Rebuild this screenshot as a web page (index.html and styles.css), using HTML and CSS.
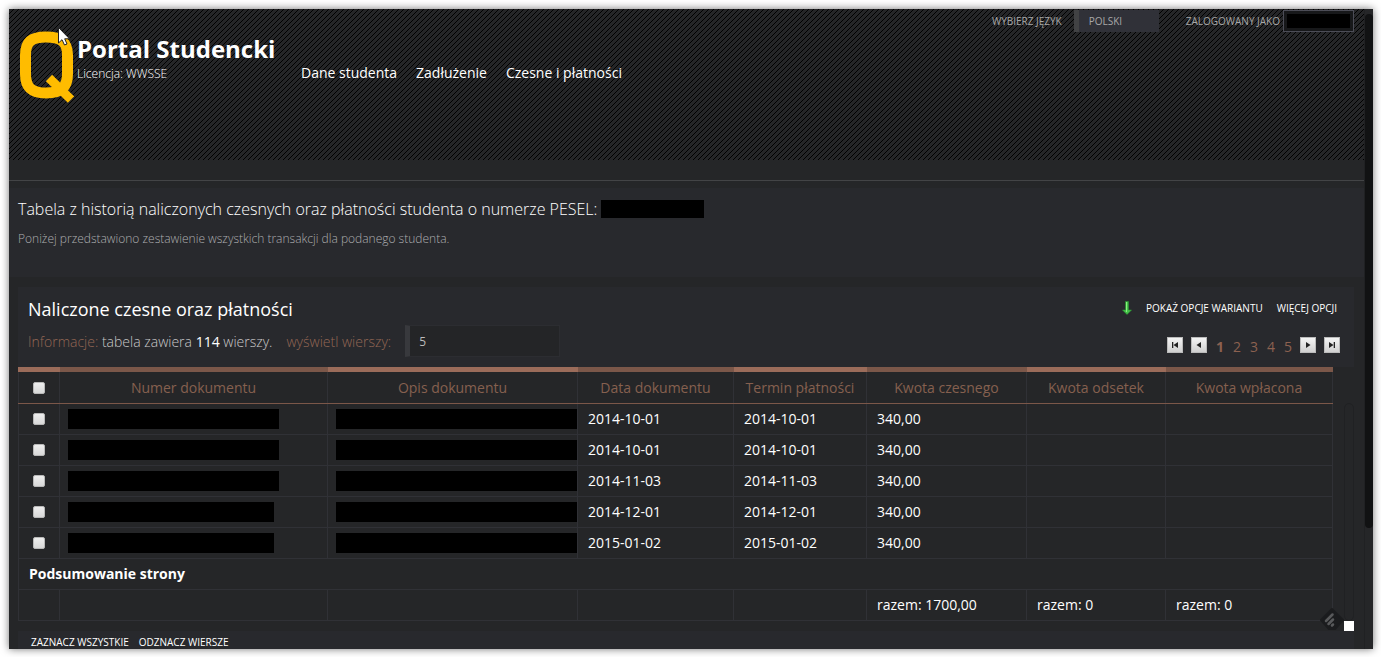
FILE: index.html
```
<!DOCTYPE html>
<html lang="pl">
<head>
<meta charset="utf-8">
<title>Portal Studencki</title>
<link rel="stylesheet" href="styles.css">
</head>
<body>
<div class="frame">
  <div class="page">
    <header class="header">
      <svg class="logo" viewBox="0 0 54 72" aria-hidden="true"><path d="M26 6 C11 6 5.500 11 5.500 24 V43 C5.500 56 11 62 26 62 C41 62 47.500 56 47.500 43 V24 C47.500 11 41 6 26 6Z" fill="none" stroke="#ffbc00" stroke-width="11"/><path d="M29 47 L51 68.500" stroke="#ffbc00" stroke-width="9"/></svg>
      <div class="brand">
        <h1>Portal Studencki</h1>
        <p>Licencja: WWSSE</p>
      </div>
      <nav class="nav">
        <a href="#">Dane studenta</a>
        <a href="#">Zadłużenie</a>
        <a href="#">Czesne i płatności</a>
      </nav>
      <div class="account">
        <label for="lang">WYBIERZ JĘZYK</label>
        <select id="lang" class="lang"><option>POLSKI</option></select>
        <span class="logged">ZALOGOWANY JAKO</span>
        <a href="#" class="user" aria-label="Konto"><span class="redacted"></span></a>
      </div>
      <svg class="cursor" viewBox="0 0 12 19" aria-hidden="true"><path d="M.5 .5 V16 L4 12.700 L6.500 18 L9 17 L6.700 11.800 H11.500Z" fill="#fff" stroke="#222"/></svg>
    </header>
    <div class="rule"></div>
    <section class="intro">
      <h2>Tabela z historią naliczonych czesnych oraz płatności studenta o numerze PESEL: <span class="redacted pesel"></span></h2>
      <p>Poniżej przedstawiono zestawienie wszystkich transakcji dla podanego studenta.</p>
    </section>
    <section class="panel">
      <div class="panel-head">
        <div>
          <h3>Naliczone czesne oraz płatności</h3>
          <div class="info">
            <p><span class="accent">Informacje:</span> tabela zawiera <b>114</b> wierszy.</p>
            <label for="rows" class="accent">wyświetl wierszy:</label>
            <input id="rows" class="rows" type="text" value="5">
          </div>
        </div>
        <div class="tools">
          <div class="options">
            <svg class="arrow" viewBox="0 0 10 14" aria-hidden="true"><path d="M3.500 .5 H6.500 V9 H9.500 L5 13.500 L.5 9 H3.500Z" fill="#45c24a" stroke="#2a9430" stroke-width=".6"/><path d="M4.500 1 V11" stroke="#8af07e"/></svg>
            <a href="#">POKAŻ OPCJE WARIANTU</a>
            <a href="#">WIĘCEJ OPCJI</a>
          </div>
          <div class="pager">
            <button aria-label="Pierwsza"><svg viewBox="0 0 8 8"><path d="M1 1 H2.300 V7 H1Z M7 1 V7 L2.500 4Z"/></svg></button>
            <button aria-label="Poprzednia"><svg viewBox="0 0 8 8"><path d="M6 1 V7 L1.500 4Z"/></svg></button>
            <span class="pages"><a href="#" class="current">1</a><a href="#">2</a><a href="#">3</a><a href="#">4</a><a href="#">5</a></span>
            <button aria-label="Następna"><svg viewBox="0 0 8 8"><path d="M2 1 V7 L6.500 4Z"/></svg></button>
            <button aria-label="Ostatnia"><svg viewBox="0 0 8 8"><path d="M7 1 H5.700 V7 H7Z M1 1 V7 L5.500 4Z"/></svg></button>
          </div>
        </div>
      </div>
      <div class="table-area">
        <table class="data">
          <colgroup><col class="c-check"><col class="c-number"><col class="c-desc"><col class="c-date"><col class="c-due"><col class="c-fee"><col class="c-interest"><col class="c-paid"></colgroup>
          <thead>
            <tr><th><input type="checkbox" aria-label="Zaznacz wszystkie"></th><th>Numer dokumentu</th><th>Opis dokumentu</th><th>Data dokumentu</th><th>Termin płatności</th><th>Kwota czesnego</th><th>Kwota odsetek</th><th>Kwota wpłacona</th></tr>
          </thead>
          <tbody>
            <tr><td><input type="checkbox" aria-label="Wiersz 1"></td><td class="mask"><span class="redacted"></span></td><td class="mask"><span class="redacted"></span></td><td>2014-10-01</td><td>2014-10-01</td><td>340,00</td><td></td><td></td></tr>
            <tr><td><input type="checkbox" aria-label="Wiersz 2"></td><td class="mask"><span class="redacted"></span></td><td class="mask"><span class="redacted"></span></td><td>2014-10-01</td><td>2014-10-01</td><td>340,00</td><td></td><td></td></tr>
            <tr><td><input type="checkbox" aria-label="Wiersz 3"></td><td class="mask"><span class="redacted"></span></td><td class="mask"><span class="redacted"></span></td><td>2014-11-03</td><td>2014-11-03</td><td>340,00</td><td></td><td></td></tr>
            <tr><td><input type="checkbox" aria-label="Wiersz 4"></td><td class="mask"><span class="redacted narrow"></span></td><td class="mask"><span class="redacted"></span></td><td>2014-12-01</td><td>2014-12-01</td><td>340,00</td><td></td><td></td></tr>
            <tr><td><input type="checkbox" aria-label="Wiersz 5"></td><td class="mask"><span class="redacted narrow"></span></td><td class="mask"><span class="redacted"></span></td><td>2015-01-02</td><td>2015-01-02</td><td>340,00</td><td></td><td></td></tr>
          </tbody>
          <tfoot>
            <tr><td colspan="8" class="summary">Podsumowanie strony</td></tr>
            <tr><td></td><td></td><td></td><td></td><td></td><td>razem: 1700,00</td><td>razem: 0</td><td>razem: 0</td></tr>
          </tfoot>
        </table>
        <div class="side-track"></div>
        <div class="corner"></div>
        <svg class="badge" viewBox="0 0 24 24" aria-hidden="true"><path d="M12 1 L23 12 L15 21 H9 L1 12Z" fill="#1b1c1e" stroke="#1b1c1e" stroke-width="2" stroke-linejoin="round"/><path d="M6 13 L12.500 6.500 M8.500 16 L13 11.500 M12 17.500 L13 16.500" stroke="#58595b" stroke-width="2.500" stroke-linecap="round"/></svg>
      </div>
      <div class="actions"><a href="#">ZAZNACZ WSZYSTKIE</a><a href="#">ODZNACZ WIERSZE</a></div>
    </section>
  </div>
  <div class="scrollbar"><div class="thumb"></div></div>
</div>
</body>
</html>
```
FILE: styles.css
```
* { box-sizing: border-box; }
html { background: #fff; }
body { margin: 0; padding: 9px 8px 8px 9px; background: #fff; font-family: "Open Sans", "Noto Sans", sans-serif; font-size: 14px; color: #fff; }
h1, h2, h3, p { margin: 0; }
a { color: inherit; text-decoration: none; }
.frame { position: relative; display: flex; height: calc(100vh - 17px); overflow: hidden; background: #252628; }
body::before { content: ""; position: absolute; top: 9px; right: 8px; bottom: 8px; left: 9px; box-shadow: 0 0 8px rgba(0, 0, 0, .55); }
.page { flex: 1; min-width: 0; }
.header { position: relative; display: flex; align-items: flex-start; height: 151px; padding-left: 11px; background-color: #252628; background-image: url("data:image/svg+xml,%3Csvg xmlns='http://www.w3.org/2000/svg' width='5' height='5' shape-rendering='crispEdges'%3E%3Cpath d='M4 0h1v1H4zM3 1h1v1H3zM2 2h1v1H2zM1 3h1v1H1zM0 4h1v1H0z'/%3E%3C/svg%3E"); }
.logo { width: 54px; height: 72px; margin-top: 22px; }
.brand { width: 224px; margin: 24px 0 0 3px; }
.brand h1 { font-size: 24px; line-height: 32px; font-weight: 700; }
.brand p { font-size: 12px; line-height: 17px; font-weight: 300; }
.nav { display: flex; gap: 19px; margin-top: 54px; line-height: 20px; }
.account { display: flex; align-items: flex-start; margin: 1px 10px 0 auto; font-size: 10px; line-height: 23px; color: #a7a7a7; }
.lang { appearance: none; width: 85px; height: 22px; margin: 0 27px 0 12px; padding: 0 0 0 10px; border: 0; border-left: 5px solid #414244; border-radius: 0; background: #303138; color: #a7a7a7; font: inherit; }
.user { width: 71px; height: 22px; margin-left: 3px; padding: 3px; border: 1px solid #4c4d57; background: #17181a; }
.redacted { display: block; background: #000; }
.user .redacted { height: 14px; }
.cursor { position: absolute; left: 49px; top: 18px; width: 12px; height: 19px; }
.rule { height: 21px; border-bottom: 1px solid #434446; }
.intro { height: 89px; margin-top: 7px; padding: 9px; background: #28292d; }
.intro h2 { display: flex; align-items: center; gap: 4px; font-size: 16px; line-height: 24px; font-weight: 300; }
.pesel { width: 103px; height: 18px; }
.intro p { margin-top: 9px; font-size: 12px; line-height: 18px; color: #adaeb0; font-weight: 300; }
.panel { margin: 10px 10px 0 9px; }
.panel-head { display: flex; justify-content: space-between; height: 80px; padding: 8px 17px 0 10px; background: #28292d; }
.panel-head h3 { font-size: 18px; line-height: 28px; font-weight: 400; }
.info { display: flex; align-items: center; gap: 14px; margin-top: 2px; color: #c8c8c8; font-weight: 300; }
.info b { color: #fff; font-weight: 400; }
.accent { color: #946754; }
.rows { width: 155px; height: 32px; padding: 0 9px; border: 1px solid #2c2d31; border-left: 5px solid #38393d; background: #242527; color: #bbb; font: 12px "Open Sans", sans-serif; }
.options { display: flex; justify-content: flex-end; align-items: center; gap: 14px; height: 26px; font-size: 10px; }
.arrow { width: 10px; height: 14px; }
.pager { display: flex; justify-content: flex-end; align-items: center; gap: 8px; margin: 13px -3px 0 0; color: #8c6150; }
.pager button { width: 16px; height: 16px; padding: 0; border: 1px solid #bbb; background: linear-gradient(#f4f4f4, #d0d0d0); line-height: 0; }
.pager svg { width: 8px; height: 8px; fill: #222; }
.pages { display: flex; gap: 9px; margin: 4px 0 0 1px; line-height: 18px; }
.current { font-weight: 700; }
.table-area { position: relative; padding-right: 21px; }
.data { width: 100%; table-layout: fixed; border-collapse: collapse; line-height: 20px; }
.c-check { width: 41px; } .c-number { width: 268px; } .c-desc { width: 250px; } .c-date { width: 156px; }
.c-due { width: 133px; } .c-fee { width: 160px; } .c-interest { width: 139px; }
th { height: 34px; padding: 0; border: 1px solid #303136; border-top: 5px solid #7b5749; border-bottom: 1px solid #7b5749; color: #85604f; font-weight: 400; }
th:nth-child(odd) { border-top-color: #9b6c5a; }
td { height: 31px; padding: 0 10px; border: 1px solid #303136; }
tbody tr:first-child td { border-top: 0; }
th:first-child, td:first-child:not(.summary) { text-align: center; }
.data input { appearance: none; display: block; width: 12px; height: 12px; margin: 0 auto; border: 1px solid #b8b8b8; border-radius: 2px; background: linear-gradient(#eee, #d8d8d8); }
td:first-child:not(.summary) { padding: 0; }
td.mask { padding: 0 0 0 8px; }
.mask .redacted { height: 20px; }
.mask:nth-child(2) .redacted { width: 211px; }
.mask:nth-child(2) .narrow { width: 206px; }
.summary { font-weight: 700; }
.side-track { position: absolute; right: 0; top: 36px; bottom: 0; width: 10px; border: 1px solid #202123; border-radius: 5px; }
.corner { position: absolute; right: 0; bottom: -10px; width: 10px; height: 10px; background: #fff; }
.badge { position: absolute; right: 10px; bottom: -11px; width: 24px; height: 24px; }
.actions { display: flex; gap: 10px; margin-top: 10px; padding: 2px 13px; background: #28292d; font-size: 10px; line-height: 18px; }
.scrollbar { width: 9px; padding-top: 5px; border-left: 1px solid #202123; }
.thumb { height: 81%; border-radius: 5px; background: #111213; }
```
